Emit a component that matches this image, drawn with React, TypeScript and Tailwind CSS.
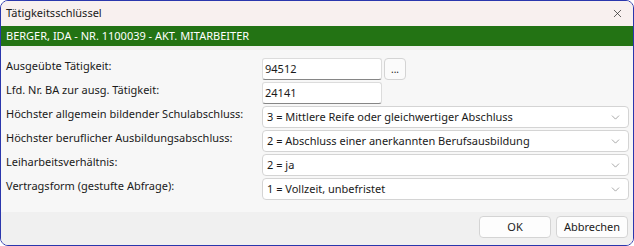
import { ChevronDown, X } from 'lucide-react'

const selects = [
  { label: 'Höchster allgemein bildender Schulabschluss:', value: '3 = Mittlere Reife oder gleichwertiger Abschluss' },
  { label: 'Höchster beruflicher Ausbildungsabschluss:', value: '2 = Abschluss einer anerkannten Berufsausbildung' },
  { label: 'Leiharbeitsverhältnis:', value: '2 = ja' },
  { label: 'Vertragsform (gestufte Abfrage):', value: '1 = Vollzeit, unbefristet' },
]

function Label({ text }: { text: string }) {
  return <div className="w-[261px] shrink-0 pl-[5px] leading-[16px] whitespace-nowrap">{text}</div>
}

export default function App() {
  return (
    <div
      className="w-[634px] h-[246px] bg-[#f7f7f7] border border-[#2b37ad] rounded-[8px] overflow-hidden flex flex-col text-[11px] text-[#1a1a1a]"
      style={{ fontFamily: '"Noto Sans", "Open Sans", sans-serif' }}
    >
      {/* title bar */}
      <div className="h-[25px] shrink-0 bg-[#f8f0ef] flex items-center justify-between pl-[5px] pr-[9px]">
        <span>Tätigkeitsschlüssel</span>
        <X className="w-[13px] h-[13px] text-[#222]" strokeWidth={1.3} />
      </div>

      {/* employee header */}
      <div className="h-[20px] shrink-0 bg-[#237314] text-white flex items-center pl-[5px]">
        BERGER, IDA - NR. 1100039 - AKT. MITARBEITER
      </div>
      <div className="h-[4px] shrink-0 bg-[#efefef]" />

      {/* form */}
      <div className="flex-1 flex flex-col gap-[2px] pt-[8px] pr-[4px]">
        <div className="flex h-[22px]">
          <Label text="Ausgeübte Tätigkeit:" />
          <div className="w-[120px] h-[22px] bg-white border border-[#dcdcdc] border-b-[#868686] rounded-[3px] px-[2px] flex items-center">
            94512
          </div>
          <button className="ml-[2px] w-[22px] h-[22px] bg-[#fbfbfb] border border-[#d4d4d4] rounded-[4px] text-[10px] leading-[18px]">
            ...
          </button>
        </div>
        <div className="flex h-[22px]">
          <Label text="Lfd. Nr. BA zur ausg. Tätigkeit:" />
          <div className="w-[120px] h-[22px] bg-white border border-[#dcdcdc] border-b-[#868686] rounded-[3px] px-[2px] flex items-center">
            24141
          </div>
        </div>
        {selects.map((s) => (
          <div key={s.label} className="flex h-[22px]">
            <Label text={s.label} />
            <div className="flex-1 h-[22px] bg-white border border-[#d4d4d4] rounded-[4px] pl-[4px] pr-[6px] flex items-center justify-between">
              <span>{s.value}</span>
              <ChevronDown className="w-[13px] h-[13px] text-[#7a7a7a]" strokeWidth={1.2} />
            </div>
          </div>
        ))}
      </div>

      {/* footer */}
      <div className="h-[33px] shrink-0 bg-[#f0f0f0] flex justify-end items-start gap-[5px] pt-[4px] pr-[5px]">
        <button className="w-[72px] h-[22px] bg-[#fdfdfd] border border-[#d4d4d4] rounded-[4px]">OK</button>
        <button className="w-[72px] h-[22px] bg-[#fdfdfd] border border-[#d4d4d4] rounded-[4px]">Abbrechen</button>
      </div>
    </div>
  )
}
